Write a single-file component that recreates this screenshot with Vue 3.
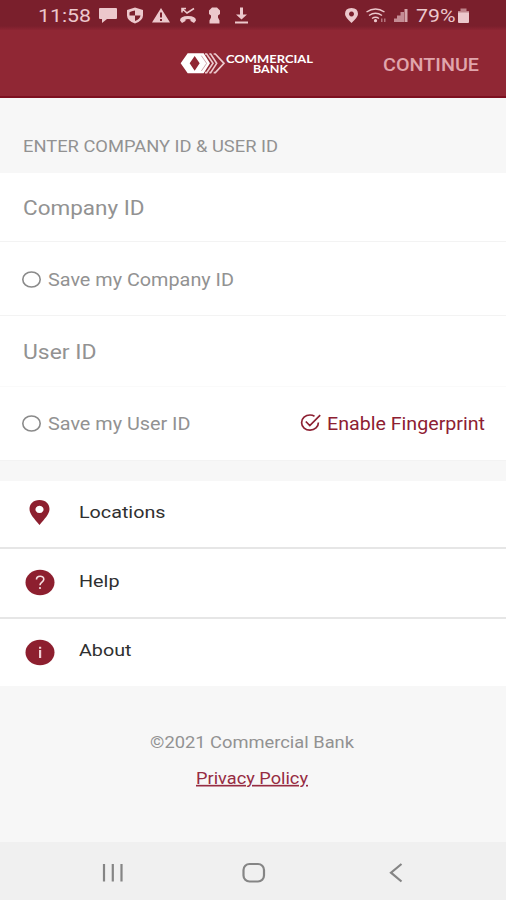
<script setup>
import { h } from 'vue'

// One line of text set to a fixed width; its capitals are centred in a 24px box.
function Label(props) {
  const { text, w, size, weight } = props
  return h('svg', { width: w, height: 24, class: 'label' }, [
    h('text', {
      x: 0, y: 12 + size * 0.355, 'font-size': size, 'font-weight': weight || 400,
      textLength: w, lengthAdjust: 'spacingAndGlyphs', fill: 'currentColor',
    }, text),
  ])
}
Label.props = ['text', 'w', 'size', 'weight']
</script>

<template>
  <div class="screen">
    <div class="status">
      <Label text="11:58" :w="53" :size="18.5" />
      <svg class="notes" width="154" height="28" viewBox="0 0 154 28" fill="currentColor">
        <path d="M1 7h16q1 0 1 1v9q0 1-1 1H8l-5 4v-4H1q-1 0-1-1V8q0-1 1-1z" />
        <path fill-rule="evenodd" d="M36 6.500l8 2.500v5.500q0 5-8 8-8-3-8-8V9zM36 9.500q-5 1-5.500 2v3H36zM36 14.500v5.500q5-2 5.500-5.500z" />
        <path fill-rule="evenodd" d="M62 7l9 14.500H53zM61 11.500h2v5h-2zM61 18h2v2h-2z" />
        <path d="M81 19.500q0-4.500 8-4.500t8 4.500L95 22l-3.500-2v-1.500q-2.500-.8-5 0V20L83 22z" />
        <path d="M83 11.500V7.500h4M83.500 8l4.500 4L95 7.500" fill="none" stroke="currentColor" stroke-width="1.600" />
        <path d="M113 6.500h5l3 3v3.500l-2 1.500v2l1.500 3v3h-10v-3l1.500-3v-2l-2-1.500V9.500z" />
        <path d="M141 6.500h3v7h4l-5.500 5-5.500-5h4zM136 20.500h13v2h-13z" />
      </svg>
      <svg class="signals" width="66" height="28" viewBox="0 0 66 28" fill="currentColor">
        <path fill-rule="evenodd" d="M7.500 7q6.500 0 6.500 6 0 3-6.500 9-6.500-6-6.500-9 0-6 6.500-6zM7.500 10.500a2.500 2.500 0 1 0 .01 0z" />
        <g fill="none" stroke="currentColor" stroke-width="1.500">
          <path d="M22.500 11q9-6 18 0M25 14.500q6.500-4.500 13 0M28 17.500q3.500-2.500 7 0" />
        </g>
        <circle cx="31.500" cy="19.700" r="1.600" />
        <path opacity=".5" d="M37 17.500h1.500V21H37zM40 17.500h1.500V21H40z" />
        <path opacity=".65" d="M50 17.500h3V21h-3zM53 14.500h3.500V21H53zM56.500 11h3.500v10h-3.500z" /><path opacity=".8" d="M60.500 8h3v13h-3z" />
      </svg>
      <Label class="percent" text="79%" :w="39.500" :size="18.500" />
      <svg class="battery" width="13" height="28" viewBox="0 0 13 28" fill="currentColor">
        <path opacity=".6" d="M3.500 7.500h6V10H12v2.500H1V10h2.500z" /><path d="M1 11.500h11v9.500q0 1-1 1H2q-1 0-1-1z" />
      </svg>
    </div>

    <header class="appbar">
      <div class="brand">
        <svg class="mark" width="46" height="22" viewBox="28 37 138 66">
          <path fill="#fff" fill-rule="evenodd" d="M30 71L51 41H99L118 71 99 101H51zM72 49L57 71 72 93 87 71z" />
          <g fill="none" stroke="#ecc9cd" stroke-width="5">
            <path d="M103 43h5l19 28-19 28h-5M116 43h4l18 28-18 28h-4M129 43h5l26 28-26 28h-5" />
          </g>
          <path d="M92 48l16 23-16 23" fill="none" stroke="#b87780" stroke-width="2" />
        </svg>
        <svg class="wordmark" width="88" height="24" fill="#fff">
          <text x="0" y="12" textLength="87" lengthAdjust="spacingAndGlyphs">COMMERCIAL</text>
          <text x="27" y="22" textLength="35" lengthAdjust="spacingAndGlyphs">BANK</text>
        </svg>
      </div>
      <Label class="continue" text="CONTINUE" :w="96" :size="17.500" :weight="500" />
    </header>

    <div class="heading"><Label text="ENTER COMPANY ID &amp; USER ID" :w="255" :size="16.500" /></div>

    <div class="field company"><Label text="Company ID" :w="121.500" :size="20" /></div>
    <div class="option first">
      <svg class="radio" width="20" height="18"><ellipse cx="10.500" cy="8.500" rx="8.700" ry="7.500" /></svg>
      <Label text="Save my Company ID" :w="186" :size="17.500" />
    </div>
    <div class="field user"><Label text="User ID" :w="73.500" :size="20" /></div>
    <div class="option second">
      <svg class="radio" width="20" height="18"><ellipse cx="10.500" cy="8.500" rx="8.700" ry="7.500" /></svg>
      <Label text="Save my User ID" :w="142.500" :size="17.500" />
      <div class="finger">
        <svg width="22" height="20" viewBox="0 0 22 20" fill="none" stroke="currentColor" stroke-width="1.700">
          <path d="M14.500 2.200Q12.500 1 10 1A8.400 7.600 0 1 0 18.400 8.500M5.800 7.500l4 4L20.200 1.200" />
        </svg>
        <Label text="Enable Fingerprint" :w="158" :size="17.500" />
      </div>
    </div>

    <nav class="menu">
      <div class="item">
        <svg class="icon" width="30" height="28" viewBox="0 0 30 28">
          <path fill="currentColor" fill-rule="evenodd" d="M14.500 1C21 1 24.500 5 24.500 10c0 5-5 10-10 16-5-6-10-11-10-16 0-5 3.500-9 10-9zM14.500 6.700a4 3.700 0 1 0 .01 0z" />
        </svg>
        <Label text="Locations" :w="86.500" :size="17" />
      </div>
      <div class="item">
        <svg class="icon" width="30" height="28" viewBox="0 0 30 28">
          <ellipse cx="15" cy="14.500" rx="14.500" ry="12.700" fill="currentColor" />
          <path d="M11.500 11.500C11.500 7.200 18.800 7.200 18.800 11.200c0 2.800-3.800 3-3.800 6" fill="none" stroke="#f5dfe2" stroke-width="1.600" />
          <circle cx="15" cy="20" r="1.100" fill="#f5dfe2" />
        </svg>
        <Label class="lower" text="Help" :w="40.500" :size="17" />
      </div>
      <div class="item">
        <svg class="icon" width="30" height="28" viewBox="0 0 30 28">
          <ellipse cx="15" cy="14.500" rx="14.500" ry="12.700" fill="currentColor" />
          <path d="M14 12h2.200v8H14zM14 8.700h2.200v2H14z" fill="#f0cfd4" />
        </svg>
        <Label text="About" :w="52.500" :size="17" />
      </div>
    </nav>

    <footer class="footer">
      <Label text="©2021 Commercial Bank" :w="204" :size="16.500" />
      <a class="privacy"><Label text="Privacy Policy" :w="112" :size="16.500" /></a>
    </footer>

    <div class="navbar">
      <svg width="22" height="20"><path d="M2 1v17.500M10.800 1v17.500M19.500 1v17.500" /></svg>
      <svg class="home" width="24" height="22"><rect x="1.500" y="2" width="20.500" height="17.500" rx="6" /></svg>
      <svg width="14" height="20"><path d="M12.500 1L2 9.700l10.500 8.800" /></svg>
    </div>
  </div>
</template>

<style>
body { margin: 0; }
</style>

<style scoped>
.screen {
  width: 506px; height: 900px; display: flex; flex-direction: column;
  background: #f7f7f7; font-family: Roboto, "Liberation Sans", sans-serif; color: #929292; overflow: hidden;
}
svg { display: block; flex: none; overflow: visible; }
.status {
  height: 30px; box-sizing: border-box; padding: 0 36px 0 38px; display: flex; align-items: center;
  background: linear-gradient(#7a1f2c 0 26px, #8c2533 30px); color: #ecc8cc;
}
.notes { margin-left: 8px; }
.signals { margin-left: auto; }
.percent { margin-left: 6px; }
.battery { margin-left: 2px; }
.appbar {
  height: 68px; box-sizing: border-box; padding: 0 27px 0 180px; display: flex;
  justify-content: space-between; align-items: center; background: #902734; border-bottom: 2px solid #7d1020;
}
.brand { display: flex; align-items: center; }
.wordmark { font: 700 11.500px/1 Lato, sans-serif; }
.wordmark text + text { font-size: 10.500px; }
.continue { color: #e0a5ac; margin-top: 3px; }
.heading { height: 75px; box-sizing: border-box; padding: 21px 0 0 22.500px; display: flex; align-items: center; }
.field, .option { box-sizing: border-box; background: #fff; display: flex; align-items: center; border-bottom: 1px solid #f3f3f3; }
.field { padding: 2px 0 0 22.500px; }
.company { height: 69px; }
.user { height: 71px; padding-top: 1px; border-color: #fafafa; }
.option { padding: 3px 21px 0; gap: 6.500px; }
.first { height: 74px; }
.second { height: 74px; padding-top: 1px; }
.radio { fill: none; stroke: #8a8a8a; stroke-width: 1.600; }
.finger { margin-left: auto; display: flex; align-items: center; gap: 5px; color: #8d2032; }
.menu { margin-top: 20px; color: #303030; background: #fff; }
.item {
  height: 70px; box-sizing: border-box; padding: 0 25px 6px; display: flex; align-items: center; gap: 24px;
  border-bottom: 2px solid #e6e6e6;
}
.item:first-child { height: 68px; padding-bottom: 5px; }
.item:last-child { height: 67px; border: 0; padding-bottom: 5px; }
.lower { margin-top: 1px; }
.icon { color: #8d1f2f; margin-top: 3px; }
.footer { flex: 1; display: flex; flex-direction: column; align-items: center; gap: 12px; padding: 44px 2px 0 0; }
.privacy { color: #962c42; }
.privacy :deep(text) { text-decoration: underline; text-decoration-skip-ink: none; }
.navbar {
  height: 58px; box-sizing: border-box; padding: 3px 103px 0 102px; display: flex; align-items: center; justify-content: space-between;
  background: #f0f0f0; fill: none; stroke: #858585; stroke-width: 2.200;
}
.home { margin-right: 5px; }
</style>
